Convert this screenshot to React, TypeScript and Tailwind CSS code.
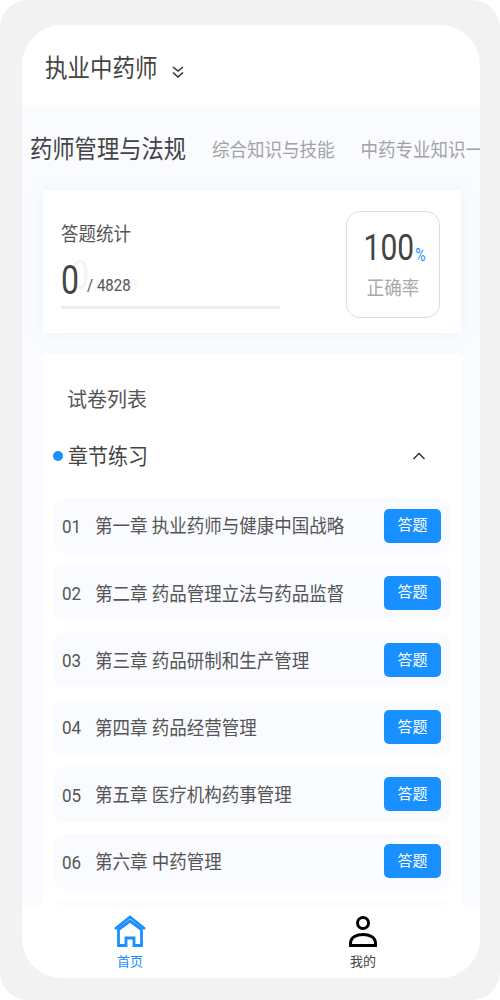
const chapters = [
  { no: '01', title: '第一章 执业药师与健康中国战略' },
  { no: '02', title: '第二章 药品管理立法与药品监督' },
  { no: '03', title: '第三章 药品研制和生产管理' },
  { no: '04', title: '第四章 药品经营管理' },
  { no: '05', title: '第五章 医疗机构药事管理' },
  { no: '06', title: '第六章 中药管理' },
  { no: '07', title: '第七章 中药管理' },
];

function HomeIcon() {
  return (
    <svg width="32" height="32" viewBox="0 0 32 32" fill="none" stroke="#1890ff" strokeWidth="2.8">
      <path d="M1 14 16 2l15 12" />
      <path d="M4.500 14.500V30.500h7.500v-7.500h8v7.500h7.500V14.500L16 6z" />
    </svg>
  );
}

function UserIcon() {
  return (
    <svg width="28" height="32" viewBox="0 0 28 32" fill="none" stroke="#000" strokeWidth="3">
      <circle cx="14" cy="8" r="5.500" />
      <path d="M1.500 30.500v-2C1.500 22 8 19.500 14 19.500s12.500 2.500 12.500 9v2z" />
    </svg>
  );
}

export default function App() {
  return (
    <div className="w-[500px] h-[1000px] bg-[#f2f2f2] rounded-[28px] pt-[25px] px-[22px] font-['Roboto','Noto_Sans_CJK_SC',sans-serif]">
      <div className="w-[458px] h-[953px] bg-white rounded-[40px] overflow-hidden flex flex-col">
        {/* Header */}
        <div className="h-[80px] shrink-0 flex items-center pl-[23px] pt-[8px]">
          <span className="text-[22.500px] text-[#444] scale-y-110">执业中药师</span>
          <svg className="ml-[13px] mt-[5px]" width="14" height="14" viewBox="0 0 14 14" fill="none" stroke="#333" strokeWidth="1.6">
            <path d="m2 2 5 4 5-4" />
            <path d="m2 7.500 5 4.500 5-4.500" />
          </svg>
        </div>

        <div className="flex-1 min-h-0 bg-[#f9fbff] overflow-hidden">
          {/* Tabs */}
          <div className="h-[85px] flex items-start pt-[27px] pl-[8px] whitespace-nowrap overflow-hidden">
            <span className="text-[22.300px] leading-[34px] text-[#444] scale-y-110">药师管理与法规</span>
            <span className="ml-[26px] mt-[1px] text-[17.500px] leading-[34px] text-[#a3a3a3] scale-y-110">综合知识与技能</span>
            <span className="ml-[26px] mt-[1px] text-[17.500px] leading-[34px] text-[#a3a3a3] scale-y-110">中药专业知识一</span>
          </div>

          {/* Stats card */}
          <div className="ml-[21px] mr-[19px] h-[143px] bg-white shadow-[0_0_12px_rgba(220,230,250,0.35)] flex justify-between pl-[18px] pr-[21px] pt-[21px]">
            <div className="w-[219px]">
              <div className="text-[17.500px] leading-[26px] text-[#555] mt-[10px] scale-y-110 origin-left">答题统计</div>
              <div className="relative flex items-end h-[40px] mt-[13px]">
                <span className="text-[32px] leading-[40px] text-[#444] scale-y-125">0</span>
                <span className="ml-[8px] mb-[3px] text-[15px] leading-[22px] text-[#555] scale-y-110">/ 4828</span>
                <span className="absolute left-[10px] -top-[5px] text-[32px] leading-[40px] text-[#444] opacity-[0.05] scale-y-125">0</span>
                <span className="absolute left-[33px] top-[14px] text-[15px] leading-[22px] text-[#444] opacity-[0.06]">/ 4828</span>
              </div>
              <div className="h-[3px] bg-[#eeeeee] mt-[6px]" />
            </div>
            <div className="w-[94px] h-[107px] border border-[#dddddd] rounded-[14px] flex flex-col items-center pt-[14px]">
              <div className="flex items-end h-[42px] ml-[3px]">
                <span className="text-[30px] leading-[42px] text-[#444] scale-y-125">100</span>
                <span className="text-[14px] leading-[20px] mb-[3px] ml-[1px] text-[#1890ff] scale-y-125">%</span>
              </div>
              <div className="text-[17.500px] leading-[26px] text-[#a8a8a8] mt-[7px] scale-y-110">正确率</div>
            </div>
          </div>

          {/* Paper list */}
          <div className="ml-[21px] mr-[19px] mt-[21px] h-[600px] bg-white px-[10px] overflow-hidden">
            <div className="pt-[30px] pl-[14px] text-[20px] leading-[32px] text-[#555]">试卷列表</div>
            <div className="h-[52px] mt-[14px] flex items-center">
              <span className="w-[10px] h-[10px] rounded-full bg-[#1890ff]" />
              <span className="ml-[5px] text-[20px] text-[#444] scale-y-110">章节练习</span>
              <svg className="ml-auto mr-[25px]" width="14" height="14" viewBox="0 0 14 14" fill="none" stroke="#333" strokeWidth="1.5">
                <path d="m1.500 10 5.500-5.500 5.500 5.500" />
              </svg>
            </div>
            <div className="mt-[16px] flex flex-col gap-[12.200px]">
              {chapters.map((c) => (
                <div key={c.no} className="h-[55px] shrink-0 bg-[#f9fbff] rounded-[12px] flex items-center pl-[9px] pr-[10px]">
                  <span className="w-[33px] mt-[2px] text-[17px] text-[#555] scale-y-110 origin-left">{c.no}</span>
                  <span className="mt-[2px] text-[17.500px] text-[#555] scale-y-110">{c.title}</span>
                  <button className="ml-auto w-[57px] h-[34px] rounded-[5px] bg-[#1890ff] text-white text-[15px]">答题</button>
                </div>
              ))}
            </div>
          </div>
        </div>

        {/* Bottom tabs */}
        <div className="h-[73px] shrink-0 bg-white flex pl-[58px] gap-[133px] pt-[10px]">
          <div className="w-[100px] flex flex-col items-center">
            <HomeIcon />
            <span className="text-[13px] leading-[20px] mt-[5px] text-[#1890ff]">首页</span>
          </div>
          <div className="w-[100px] flex flex-col items-center">
            <UserIcon />
            <span className="text-[13px] leading-[20px] mt-[5px] text-[#444]">我的</span>
          </div>
        </div>
      </div>
    </div>
  );
}
